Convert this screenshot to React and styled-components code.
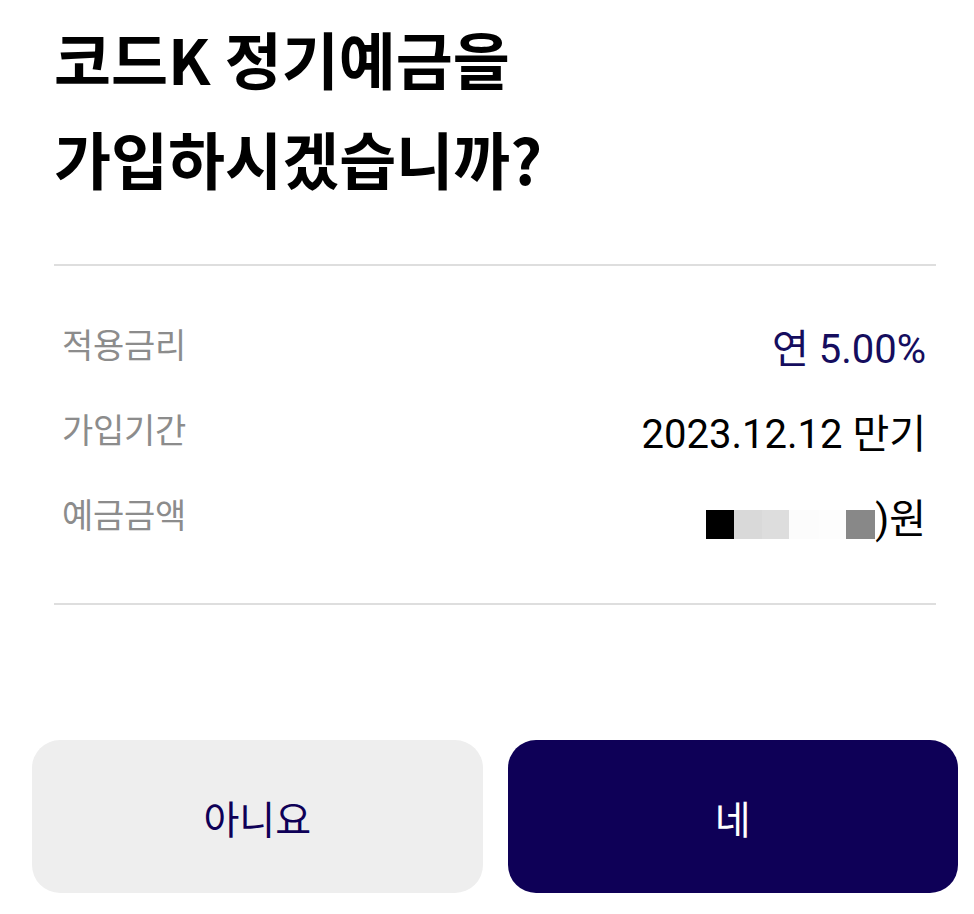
import styled, { createGlobalStyle } from "styled-components";

const GlobalStyle = createGlobalStyle`
  html, body {
    margin: 0;
    padding: 0;
    background: #fff;
  }
  body {
    font-family: "Noto Sans CJK KR", "Noto Sans", sans-serif;
    -webkit-font-smoothing: antialiased;
  }
`;

const Page = styled.div`
  width: 974px;
  height: 914px;
  display: flex;
  flex-direction: column;
  box-sizing: border-box;
  overflow: hidden;
`;

const Content = styled.section`
  padding: 8px 38px 0 54px;
`;

const Title = styled.h1`
  margin: 0 0 56px 0;
  font-family: "Noto Sans CJK KR", sans-serif;
  font-size: 62px;
  line-height: 100px;
  font-weight: 700;
  color: #000;
`;

const Divider = styled.hr`
  margin: 0;
  border: none;
  height: 2px;
  background: #dedede;
`;

const InfoList = styled.dl`
  margin: 0;
  padding: 55px 10px 27px 8px;
`;

const Row = styled.div`
  height: 85px;
  display: flex;
  align-items: flex-start;
  justify-content: space-between;
`;

const Label = styled.dt`
  margin: 0;
  font-size: 34px;
  line-height: 46px;
  font-weight: 400;
  color: #8c8c8c;
  letter-spacing: -0.3px;
`;

const Value = styled.dd`
  margin: 0;
  padding-top: 6px;
  display: flex;
  align-items: flex-end;
  font-family: Roboto, "Noto Sans CJK KR", sans-serif;
  font-size: 40px;
  line-height: 46px;
  font-weight: 400;
  color: ${(p) => (p.$accent ? "#150d5e" : "#000")};
`;

const Mosaic = styled.span`
  display: inline-flex;
  align-items: flex-end;
  margin-bottom: 4px;
`;

const Cell = styled.span`
  display: block;
  width: ${(p) => p.$w}px;
  height: ${(p) => p.$h || 29}px;
  background: ${(p) => p.$c};
`;

const ButtonRow = styled.div`
  margin-top: 135px;
  padding: 0 16px 0 32px;
  display: grid;
  grid-template-columns: 1fr 1fr;
  gap: 25px;
`;

const Button = styled.button`
  height: 153px;
  border: none;
  border-radius: 28px;
  font-family: "Noto Sans CJK KR", sans-serif;
  font-size: 39px;
  font-weight: 400;
  background: ${(p) => (p.$primary ? "#0e0057" : "#eeeeee")};
  color: ${(p) => (p.$primary ? "#fff" : "#0e0057")};
  cursor: pointer;
`;

const mosaicCells = [
  { w: 28, c: "#000" },
  { w: 28, c: "#d9d9d9" },
  { w: 27, c: "#dddddd" },
  { w: 30, c: "#fcfcfc" },
  { w: 27, c: "#fdfdfd" },
  { w: 29, c: "#888888" },
];

function App() {
  return (
    <Page>
      <GlobalStyle />
      <Content>
        <Title>
          코드K 정기예금을
          <br />
          가입하시겠습니까?
        </Title>
        <Divider />
        <InfoList>
          <Row>
            <Label>적용금리</Label>
            <Value $accent>연 5.00%</Value>
          </Row>
          <Row>
            <Label>가입기간</Label>
            <Value>2023.12.12 만기</Value>
          </Row>
          <Row>
            <Label>예금금액</Label>
            <Value>
              <Mosaic>
                {mosaicCells.map((cell, i) => (
                  <Cell key={i} $w={cell.w} $c={cell.c} $h={cell.h} />
                ))}
              </Mosaic>
              )원
            </Value>
          </Row>
        </InfoList>
        <Divider />
      </Content>
      <ButtonRow>
        <Button>아니요</Button>
        <Button $primary>네</Button>
      </ButtonRow>
    </Page>
  );
}

export default App;
